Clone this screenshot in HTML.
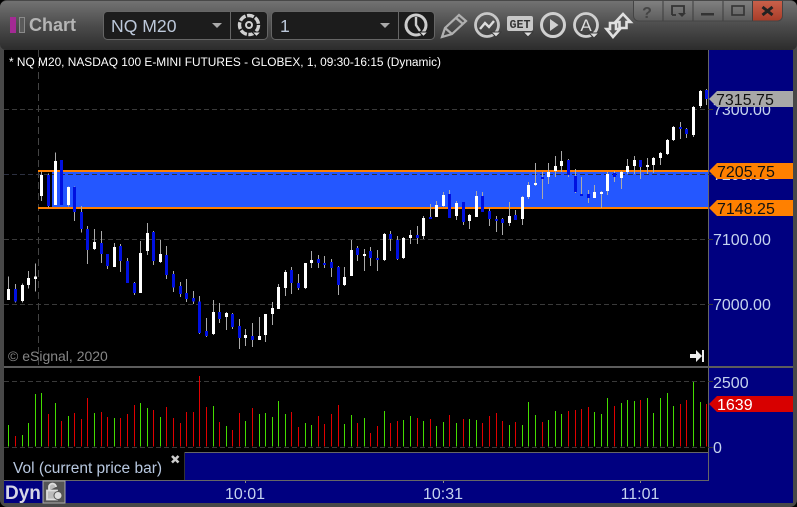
<!DOCTYPE html>
<html><head><meta charset="utf-8"><style>
html,body{margin:0;padding:0;background:#000;width:797px;height:507px;overflow:hidden}
svg{display:block}
text{font-family:"Liberation Sans",sans-serif}
</style></head><body>
<svg width="797" height="507" viewBox="0 0 797 507" xmlns="http://www.w3.org/2000/svg">
<defs>
<linearGradient id="tb" x1="0" y1="0" x2="0" y2="1"><stop offset="0" stop-color="#727272"/><stop offset=".5" stop-color="#4c4c4c"/><stop offset="1" stop-color="#2c2c2c"/></linearGradient>
<linearGradient id="btn" x1="0" y1="0" x2="0" y2="1"><stop offset="0" stop-color="#808080"/><stop offset="1" stop-color="#5c5c5c"/></linearGradient>
<linearGradient id="cls" x1="0" y1="0" x2="0" y2="1"><stop offset="0" stop-color="#c9604a"/><stop offset="1" stop-color="#a83c28"/></linearGradient>
</defs>
<rect width="797" height="507" fill="#000"/>
<rect x="0" y="0" width="797" height="507" rx="7" fill="#484848"/>
<rect x="0" y="1" width="797" height="49" rx="6" fill="url(#tb)"/>

<!-- main panels -->
<rect x="4" y="50" width="704" height="316" fill="#000"/>
<rect x="709" y="50" width="84" height="431" fill="#000080"/>
<rect x="4" y="368" width="704" height="84" fill="#000"/>
<rect x="4" y="452" width="180" height="28" fill="#000"/>
<rect x="185" y="453" width="523" height="27" fill="#000080"/>
<rect x="4" y="481" width="789" height="22" fill="#000080"/>
<rect x="185" y="452" width="524" height="1" fill="#666"/>
<rect x="184" y="452" width="1" height="28" fill="#333"/>
<rect x="4" y="480" width="705" height="1" fill="#666"/>
<rect x="708" y="50" width="1" height="431" fill="#666"/>
<rect x="4" y="366" width="789" height="2" fill="#5c5c5c"/>

<!-- grid -->
<g stroke="#3a3a3a" stroke-dasharray="5 3" fill="none" shape-rendering="crispEdges">
<path d="M4 109.5H713M4 304.5H713M4 239.5H713M4 381.5H713M4 447.5H713"/>
<path stroke="#444" d="M38.5 50V366" stroke-dasharray="7 4"/>
</g>

<!-- band -->
<rect x="52" y="172" width="656" height="35" fill="#2457ff"/>
<rect x="38" y="170" width="670" height="2" fill="#ff8000"/>
<rect x="38" y="207" width="670" height="2" fill="#ff8000"/>
<path d="M4 174.5H713" stroke="#2c3040" stroke-dasharray="5 3" shape-rendering="crispEdges"/>

<!-- candles -->
<g shape-rendering="crispEdges" fill="none">
<g transform="translate(.1667 140) scale(.33333)">
<path stroke="#aaa" stroke-width="3" d="M25 410V480M46 432V488M67 430V488M85 393V445M106 370V455M124 95V183M145 100V203M166 37V195M205 140V200M223 140V243M244 198V278M262 258V372M283 267V330M304 273V369M322 342V387M343 309V381M361 312V396M382 354V429M403 426V465M421 303V459M442 249V345M460 273V375M481 300V369M499 318V417M520 393V456M541 426V471M559 417V486M580 453V492M598 468V582M619 534V591M640 480V585M658 489V549M679 516V570M697 519V567M718 537V627M736 567V618M757 549V621M778 531V600M796 522V606"/>
<path stroke="#fff" stroke-width="9" d="M25 447V480M67 435V483M85 414V435M106 410V417M124 105V168M166 63V195M205 141V195M283 306V327M343 321V381M421 339V459M442 279V333M481 342V366M640 516V582M679 519V531M736 585V594M778 588V600M796 522V585"/>
<path stroke="#0010e0" stroke-width="9" d="M46 447V485M145 105V198M184 60V195M223 141V216M244 216V267M262 267V330M304 309V342M322 342V378M361 318V363M382 363V429M403 429V459M460 276V363M499 345V405M520 402V442M541 438V462M559 459V477M580 474V484M598 484V579M619 573V588M658 516V537M697 522V561M718 558V594M757 588V600"/>
</g>
<path stroke="#aaa" d="M272.5 302V325"/>
<path stroke="#fff" stroke-width="3" d="M272.5 308V314"/>
<g transform="translate(260.1667 140) scale(.33333)">
<path stroke="#aaa" stroke-width="3" d="M55 432V490M76 390V468M94 381V462M115 402V450M136 369V447M154 333V384M175 345V384M193 348V384M214 357V411M235 378V465M253 381V438M274 300V408M292 318V363M313 327V393M331 321V378M352 330V393M373 279V363M391 273V333M412 288V360M430 291V357M451 270V312M472 258V312M490 228V297M511 192V237M529 183V231M550 156V201M568 150V234M589 183V240M610 186V255M628 222V267M649 153V231M667 156V216M688 204V258M709 228V276M727 234V285M748 186V258"/>
<path stroke="#fff" stroke-width="9" d="M55 441V507M76 396V444M136 369V444M154 360V369M253 411V435M274 330V408M313 342V348M373 282V360M430 294V354M451 285V294M490 234V288M529 195V231M550 165V198M589 189V228M628 225V243M649 168V231M748 228V249"/>
<path stroke="#0010e0" stroke-width="9" d="M94 390V429M115 429V444M175 357V369M193 369V375M214 366V384M235 381V435M292 324V345M331 333V354M352 354V360M391 282V297M412 300V357M472 285V294M511 231V237M568 162V234M610 186V246M667 168V216M688 213V237M709 237V243M727 237V249"/>
</g>
<g transform="translate(500.1667 80) scale(.33333)">
<path stroke="#aaa" stroke-width="3" d="M46 390V420M67 348V435M85 306V357M106 249V318M127 276V357M145 249V312M166 228V291M184 213V276M205 237V291M226 267V339M244 291V348M265 330V369M283 315V354M304 333V384M322 276V345M343 273V306M364 273V327M382 237V282M403 228V282M421 240V297M442 234V282M460 231V279M481 216V255M502 177V225M520 138V183M541 126V177M559 144V174M580 78V171M601 30V84M619 27V75"/>
<path stroke="#fff" stroke-width="9" d="M67 351V417M85 315V351M106 309V315M145 276V291M166 258V273M184 243V258M283 336V354M304 336V342M322 282V333M364 276V294M382 258V276M403 240V258M442 255V261M460 234V255M481 219V234M502 180V222M520 141V180M580 81V165M601 33V78"/>
<path stroke="#0010e0" stroke-width="9" d="M46 405V420M127 291V297M205 240V285M226 288V336M244 342V348M265 342V354M343 279V291M421 240V261M541 141V147M559 147V162M619 30V57"/>
</g>
</g>

<!-- volume -->
<g shape-rendering="crispEdges" fill="none" stroke-width="3">
<g transform="translate(.1667 360) scale(.33333)">
<path stroke="#44dd00" d="M25 195V260M67 225V260M85 189V260M106 102V260M124 99V260M166 129V260M205 168V260M283 159V260M343 174V260M421 129V260M442 144V260M481 171V260M640 138V260M679 198V260M736 183V260M778 162V260M796 159V260"/>
<path stroke="#e00000" d="M46 228V260M145 162V260M184 183V260M223 159V260M244 177V260M262 114V260M304 156V260M322 171V260M361 174V260M382 162V260M403 135V260M460 150V260M499 141V260M520 174V260M541 189V260M559 156V260M580 156V260M598 48V260M619 141V260M658 186V260M697 210V260M718 159V260M757 144V260"/>
</g>
<g transform="translate(270.1667 360) scale(.33333)">
<path stroke="#44dd00" d="M7 171V260M25 123V260M46 162V260M106 189V260M124 195V260M223 192V260M244 165V260M283 174V260M343 153V260M400 180V260M421 168V260M460 183V260M499 198V260M520 186V260M559 189V260M598 177V260M619 180V260M718 195V260M757 195V260M775 126V260M796 165V260"/>
<path stroke="#e00000" d="M64 156V260M85 201V260M145 168V260M163 192V260M184 162V260M205 135V260M262 189V260M301 219V260M322 198V260M361 189V260M382 183V260M442 174V260M481 177V260M538 165V260M580 177V260M637 189V260M658 168V260M679 159V260M697 183V260M736 186V260"/>
</g>
<g transform="translate(530.1667 360) scale(.33333)">
<path stroke="#44dd00" d="M55 180V260M76 153V260M94 162V260M193 156V260M214 162V260M232 114V260M274 129V260M292 120V260M313 123V260M352 114V260M370 159V260M391 114V260M412 99V260M430 138V260M490 66V260M511 126V260"/>
<path stroke="#e00000" d="M37 186V260M115 153V260M136 150V260M154 147V260M175 141V260M253 138V260M331 120V260M451 132V260M469 120V260M529 132V260"/>
</g>
</g>

<!-- chart text -->
<text x="9" y="66" font-size="11.5" fill="#fff" textLength="432" lengthAdjust="spacingAndGlyphs">* NQ M20, NASDAQ 100 E-MINI FUTURES - GLOBEX, 1, 09:30-16:15 (Dynamic)</text>
<text x="8" y="361" font-size="14" fill="#868686">© eSignal, 2020</text>
<path d="M690 354h6v-4l6 6-6 6v-4h-6z" fill="#eee"/>
<rect x="702" y="350" width="2" height="12" fill="#eee"/>

<!-- axis -->
<g font-size="16" fill="#c5d3ee">
<text x="713" y="115">7300.00</text>
<text x="713" y="180">7200.00</text>
<text x="713" y="245">7100.00</text>
<text x="713" y="310">7000.00</text>
<text x="713" y="388">2500</text>
<text x="713" y="453">0</text>
</g>
<path d="M709 99l8-8h76v16h-76z" fill="#a8a8a8"/>
<path d="M709 171l8-8h76v16h-76z" fill="#ff8000"/>
<path d="M709 208l8-8h76v16h-76z" fill="#ff8000"/>
<path d="M709 404l8-8h76v16h-76z" fill="#d80000"/>
<g font-size="16" fill="#111">
<text x="716" y="105">7315.75</text>
<text x="717" y="177">7205.75</text>
<text x="717" y="214">7148.25</text>
</g>
<text x="717" y="410" font-size="16" fill="#fff">1639</text>

<!-- legend + bottom -->
<text x="13" y="473" font-size="15.500" fill="#b8c8e0">Vol (current price bar)</text>
<path d="M172 456l6.500 6.500M178.500 456l-6.500 6.500" stroke="#ccc" stroke-width="2.600" fill="none"/>
<text x="5" y="499" font-size="19" font-weight="bold" fill="#d5d5e5">Dyn</text>
<rect x="43" y="481" width="22" height="22" fill="#555" stroke="#aaa"/>
<path d="M47 490.500h10v9H47zM49 490.500V487a3.500 3.500 0 0 1 7 0" fill="#bbb" stroke="#ddd" stroke-width="1.800" fill-rule="evenodd"/>
<circle cx="58" cy="495.500" r="4" fill="#ddd" stroke="#555"/>
<g font-size="16" fill="#c5d3ee" text-anchor="middle">
<text x="245" y="499">10:01</text>
<text x="443" y="499">10:31</text>
<text x="640" y="499">11:01</text>
</g>
<path d="M245.500 481v2M443.500 481v2M640.500 481v2" stroke="#888" shape-rendering="crispEdges"/>

<!-- toolbar left -->
<rect x="10" y="17" width="6" height="16" fill="#a42a94"/>
<rect x="19.500" y="17.500" width="5" height="15" fill="#5a5a5a" stroke="#8a8a8a"/>
<text x="29" y="31" font-size="18" font-weight="bold" fill="#b5b5b5">Chart</text>

<rect x="103.500" y="11.500" width="164" height="28" rx="4" fill="#1c1c1c" stroke="#666"/>
<rect x="230" y="12" width="1" height="27" fill="#666"/>
<text x="111" y="32" font-size="17.600" fill="#bcc8da">NQ M20</text>
<path d="M212 23h10l-5 5z" fill="#aaa"/>
<!-- gear -->
<circle cx="249" cy="25" r="9.500" fill="none" stroke="#d0d0d0" stroke-width="3.400" stroke-dasharray="7 1.500"/>
<circle cx="249" cy="25" r="3" fill="none" stroke="#d0d0d0" stroke-width="2"/>
<path d="M252 32h9l-4.500 4.500z" fill="#ddd" stroke="#1c1c1c"/>

<rect x="271.500" y="11.500" width="163" height="28" rx="4" fill="#1c1c1c" stroke="#666"/>
<rect x="398" y="12" width="1" height="27" fill="#666"/>
<text x="280" y="32" font-size="17.600" fill="#bcc8da">1</text>
<path d="M380 23h10l-5 5z" fill="#aaa"/>
<!-- clock -->
<circle cx="416" cy="25" r="10" fill="none" stroke="#ccc" stroke-width="3"/>
<path d="M416 17v8l4 6" fill="none" stroke="#ccc" stroke-width="2.400"/>
<path d="M419 32h9l-4.500 4.500z" fill="#ddd" stroke="#1c1c1c"/>

<!-- pencil -->
<path d="M442 37l3-9 14-13 7 6-14 13zM445 28l7 6M456 18l7 6" fill="none" stroke="#b0b0b0" stroke-width="2.200"/>
<!-- chart circle -->
<circle cx="487" cy="25" r="11.500" fill="none" stroke="#c8c8c8" stroke-width="2.800"/>
<path d="M480 29l5-6 4 4 5-6" fill="none" stroke="#ddd" stroke-width="2.400"/>
<path d="M491 32h10l-5 5z" fill="#ddd" stroke="#3a3a3a"/>
<!-- GET -->
<rect x="507" y="16" width="26" height="15" rx="2" fill="#c8c8c8"/>
<text x="520" y="28" font-size="12" font-weight="bold" fill="#333" text-anchor="middle" style="font-family:'Liberation Mono',monospace" textLength="21" lengthAdjust="spacingAndGlyphs">GET</text>
<path d="M523 32h10l-5 5z" fill="#ddd" stroke="#3a3a3a"/>
<!-- play -->
<circle cx="553" cy="25" r="11.500" fill="none" stroke="#d0d0d0" stroke-width="3"/>
<path d="M550 19l8.500 6-8.500 6z" fill="#d0d0d0"/>
<!-- A -->
<circle cx="586" cy="25" r="11.500" fill="none" stroke="#d0d0d0" stroke-width="2.800"/>
<text x="586" y="31" font-size="17" fill="#ddd" text-anchor="middle">A</text>
<path d="M589 33h10l-5 5z" fill="#ddd" stroke="#3a3a3a"/>
<!-- arrows -->
<path d="M623 14l7.500 8h-4v6h-7v-6h-4z" fill="#555" stroke="#e0e0e0" stroke-width="2.600"/>
<path d="M610 23h6v6h4l-7 8-6.500-8h3.500z" fill="#555" stroke="#e0e0e0" stroke-width="2.600"/>

<!-- window buttons -->
<path d="M633 1h150v15a5 5 0 0 1-5 5H638a5 5 0 0 1-5-5z" fill="url(#btn)"/>
<path d="M753 1h30v15a5 5 0 0 1-5 5h-25z" fill="url(#cls)"/>
<path d="M663 1v20M693 1v20M723 1v20M752.500 1v20" stroke="#3d3d3d"/>
<path d="M633.500 1v15a5 5 0 0 0 5 5h139a5 5 0 0 0 5-5V1" fill="none" stroke="#444"/>
<text x="647" y="18" font-size="16" font-weight="bold" fill="#444" text-anchor="middle">?</text>
<path d="M672 15v-9h12v8" fill="none" stroke="#333" stroke-width="1.800"/>
<path d="M672 15h4" stroke="#333" stroke-width="1.800"/>
<path d="M678 13h8l-4 4z" fill="#333"/>
<rect x="701" y="13" width="13" height="2.500" fill="#333"/>
<rect x="732" y="6" width="12" height="9" fill="none" stroke="#333" stroke-width="1.600"/>
<path d="M762.500 7l10 8M772.500 7l-10 8" stroke="#222" stroke-width="3" fill="none"/>
</svg>
</body></html>
